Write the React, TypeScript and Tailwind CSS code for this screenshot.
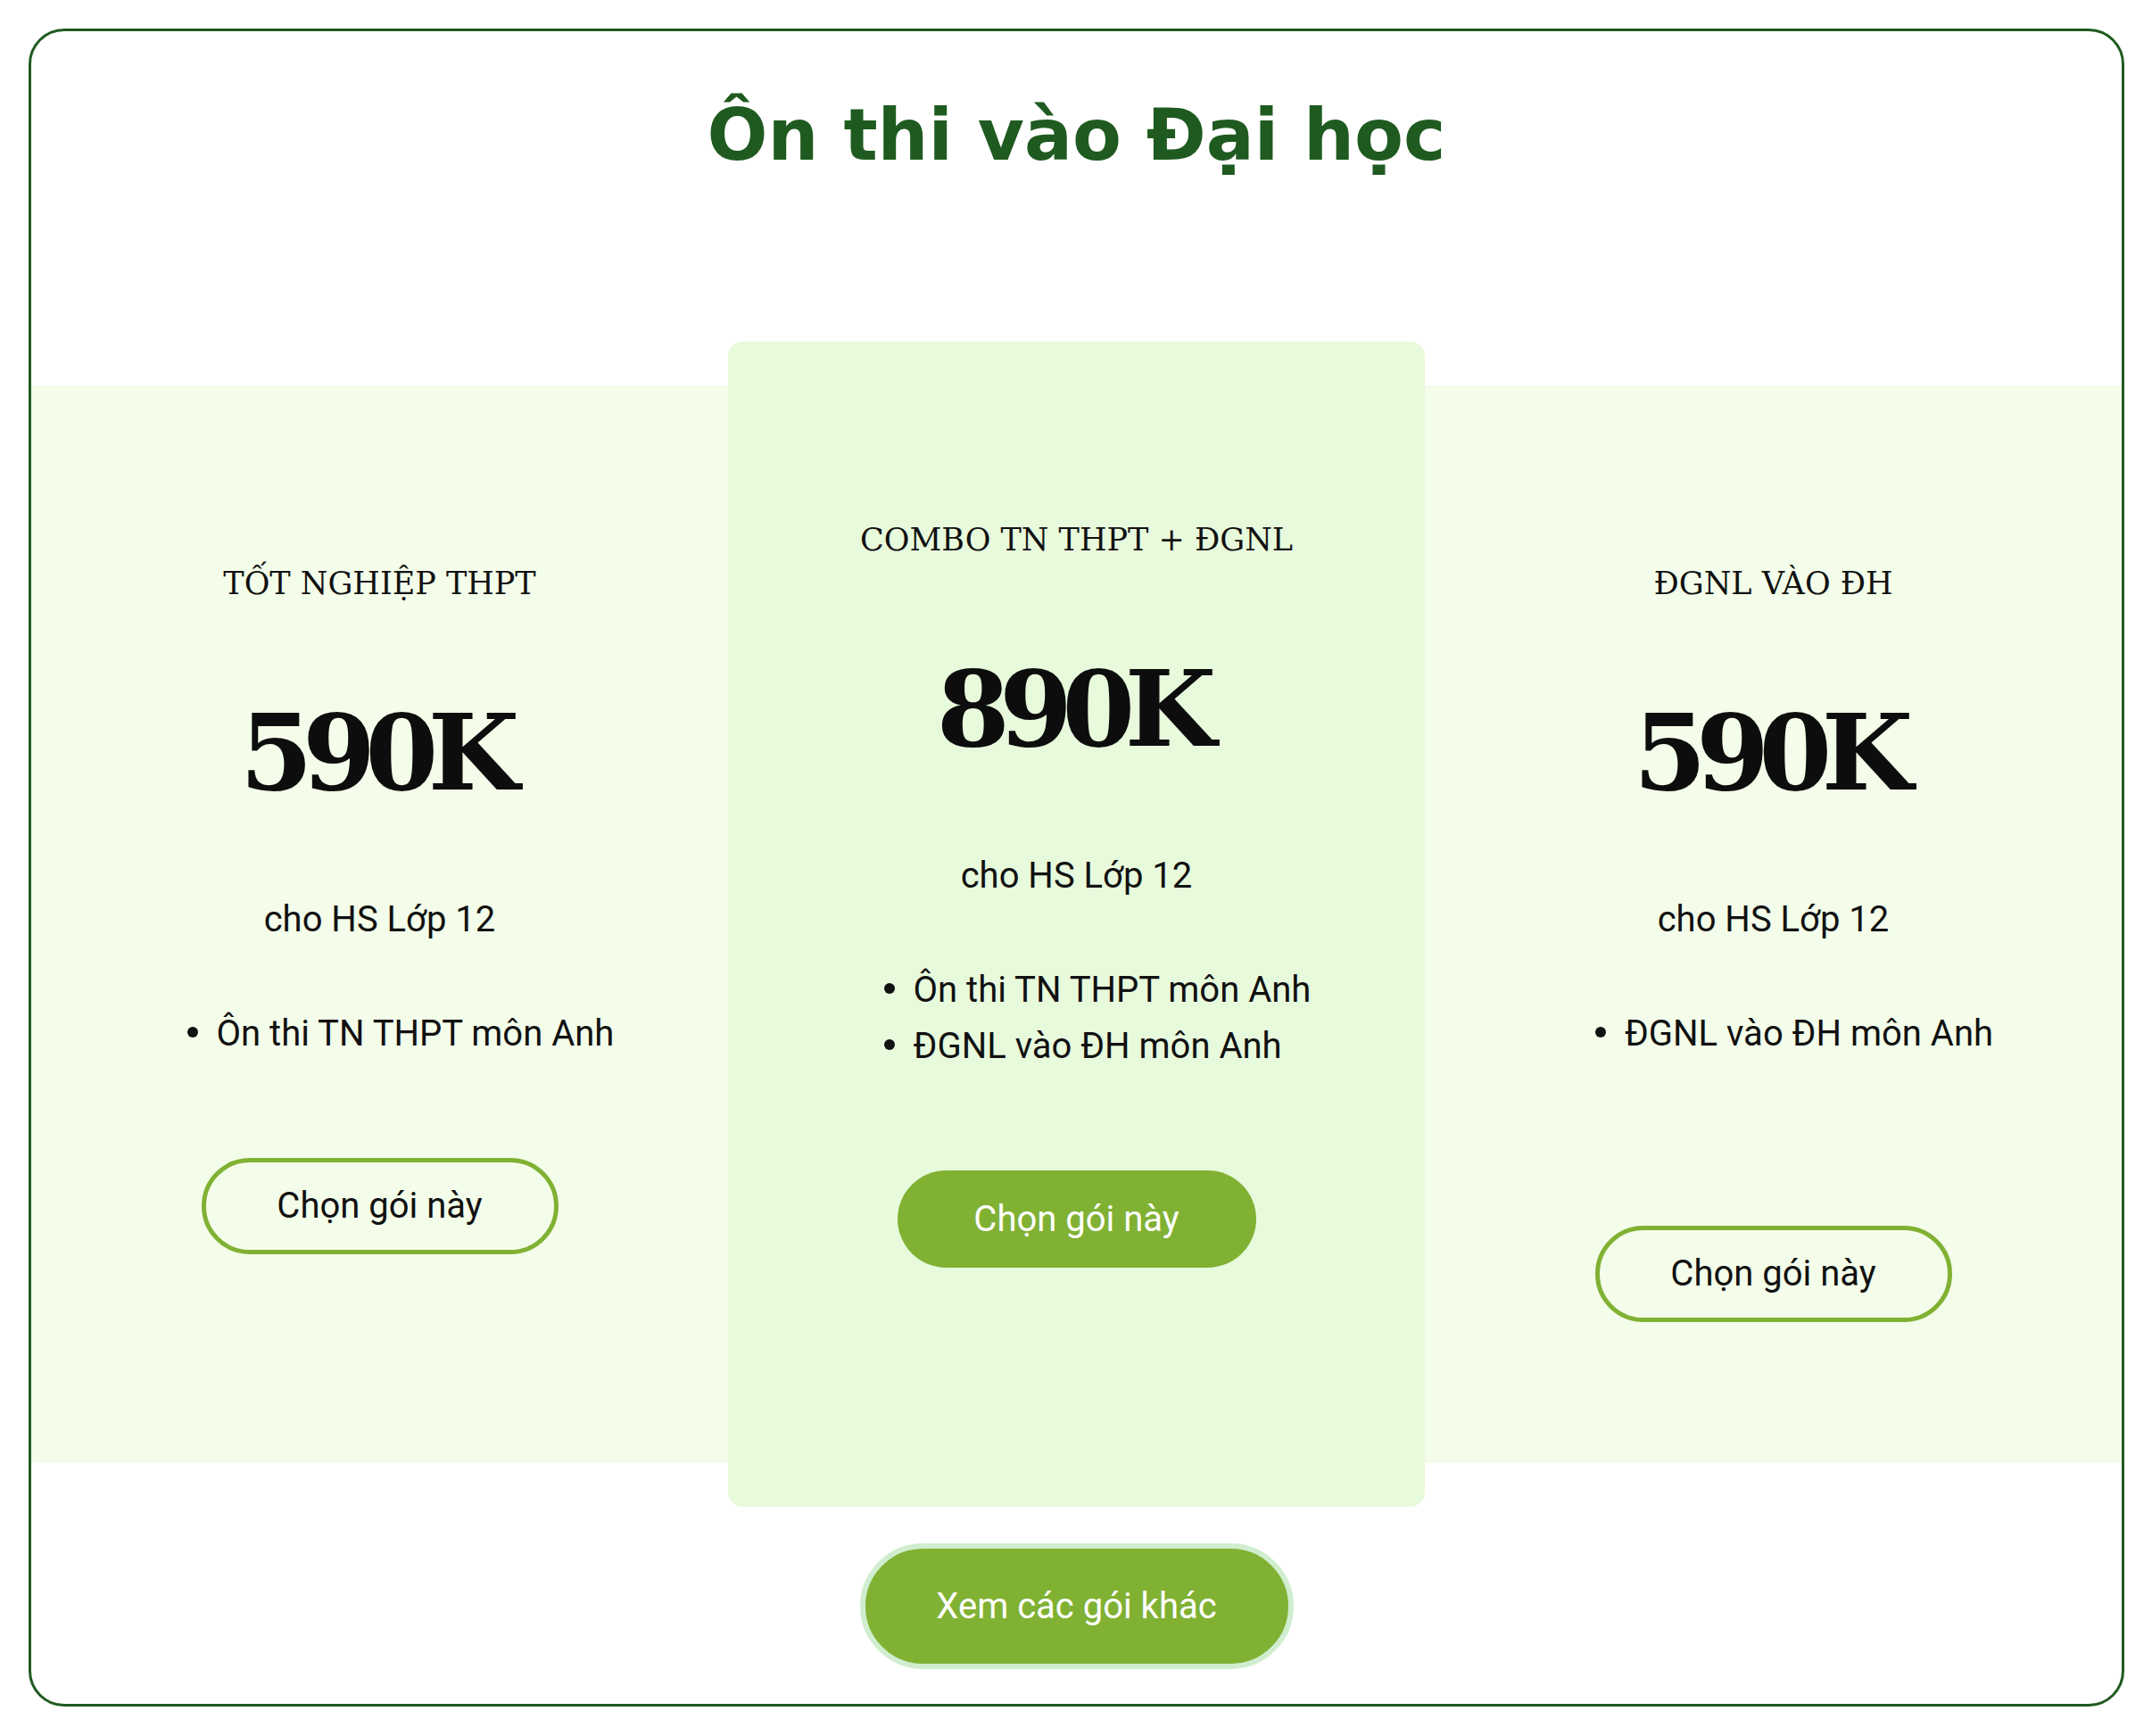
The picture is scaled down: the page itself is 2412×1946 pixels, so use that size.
const plans = [
  {
    name: "TỐT NGHIỆP THPT",
    price: "590K",
    audience: "cho HS Lớp 12",
    items: ["Ôn thi TN THPT môn Anh"],
    featured: false,
    buttonGap: "mt-[108px]",
  },
  {
    name: "COMBO TN THPT + ĐGNL",
    price: "890K",
    audience: "cho HS Lớp 12",
    items: ["Ôn thi TN THPT môn Anh", "ĐGNL vào ĐH môn Anh"],
    featured: true,
    buttonGap: "mt-[108px]",
  },
  {
    name: "ĐGNL VÀO ĐH",
    price: "590K",
    audience: "cho HS Lớp 12",
    items: ["ĐGNL vào ĐH môn Anh"],
    featured: false,
    buttonGap: "mt-[184px]",
  },
];

const App = () => {
  return (
    <div className="min-h-screen bg-white pt-[32px] pb-[33px] px-[32px] pr-[31px] font-['Roboto',sans-serif] text-[#111]">
      <div className="rounded-[40px] border-[3px] border-[#1f5b20] pt-[69px] pb-[39px]">
        {/* Title */}
        <h1 className="text-center font-['DejaVu_Sans',sans-serif] text-[80px] font-bold leading-[96px] text-[#1f5b20]">
          Ôn thi vào Đại học
        </h1>

        {/* Plans */}
        <div className="mt-[232px] grid h-[1208px] grid-cols-3 bg-[#f3fde9]">
          {plans.map((plan) => (
            <div
              key={plan.name}
              className={
                plan.featured
                  ? "-my-[49px] flex flex-col items-center rounded-[16px] bg-[#e8fadc] pt-[198px]"
                  : "flex flex-col items-center pt-[198px]"
              }
            >
              <h3 className="font-['DejaVu_Serif',serif] text-[35px] leading-[48px] text-[#111]">
                {plan.name}
              </h3>

              <p className="mt-[107px] pr-[0.1em] font-['DejaVu_Serif',serif] text-[118px] font-bold leading-[118px] tracking-[-0.1em] text-[#0d0d0d]">
                {plan.price}
              </p>

              <p className="mt-[104px] text-[40px] leading-[48px]">
                {plan.audience}
              </p>

              <ul className="mt-[72px] inline-block pl-[80px] text-left text-[40px] leading-[63px]">
                {plan.items.map((item) => (
                  <li key={item} className="-ml-[33px] flex items-center gap-[21px]">
                    <span className="mb-[4px] h-[12px] w-[12px] shrink-0 rounded-full bg-[#111]" />
                    <span>{item}</span>
                  </li>
                ))}
              </ul>

              <button
                className={
                  plan.featured
                    ? `${plan.buttonGap} flex h-[109px] w-[402px] items-center justify-center rounded-full bg-[#80b133] text-[40px] text-white`
                    : `${plan.buttonGap} flex h-[108px] w-[400px] items-center justify-center rounded-full border-[5px] border-[#80b133] text-[40px] text-[#111]`
                }
              >
                Chọn gói này
              </button>
            </div>
          ))}
        </div>

        {/* More plans */}
        <div className="mt-[90px] flex justify-center">
          <button className="flex h-[141px] w-[486px] items-center justify-center rounded-full border-[6px] border-[#d0eecf] bg-[#80b133] text-[40px] text-white">
            Xem các gói khác
          </button>
        </div>
      </div>
    </div>
  );
};

export default App;
